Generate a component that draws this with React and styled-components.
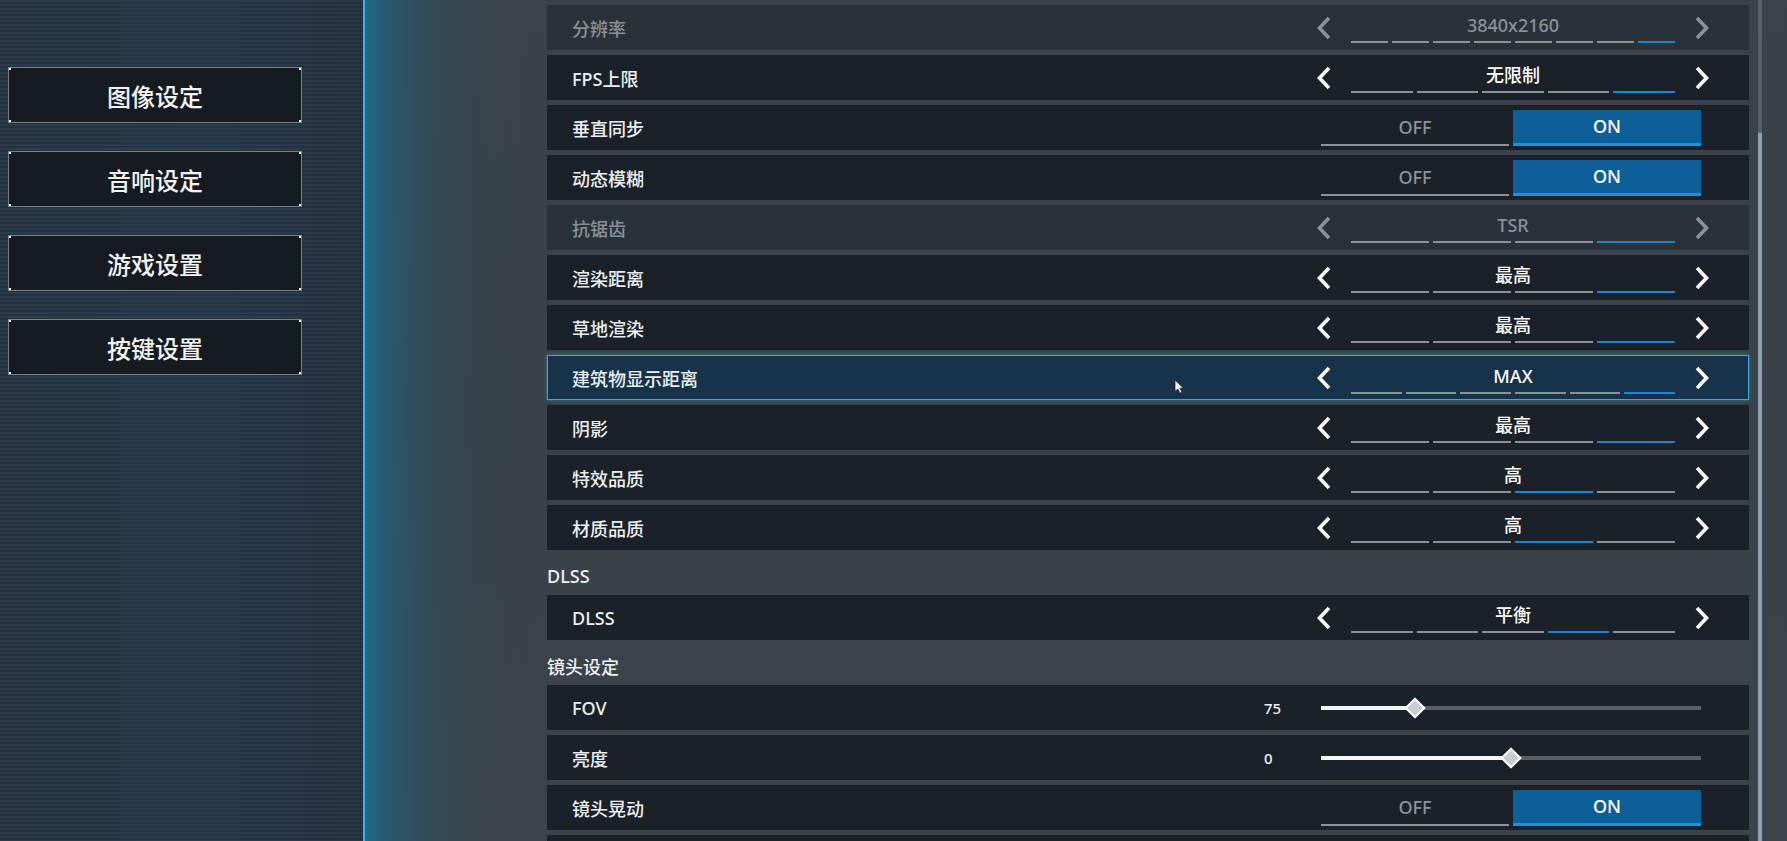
import styled, { createGlobalStyle } from 'styled-components';

const GlobalStyle = createGlobalStyle`
  html, body {
    margin: 0;
    padding: 0;
    background: #39434a;
  }
  * {
    box-sizing: border-box;
  }
`;

const Screen = styled.div`
  display: flex;
  width: 1787px;
  height: 841px;
  overflow: hidden;
  font-family: "Noto Sans", "Noto Sans CJK SC", sans-serif;
  color: #e9ecee;
`;

const Sidebar = styled.aside`
  width: 365px;
  flex-shrink: 0;
  border-right: 2px solid #3fb4e6;
  padding: 67px 0 0 8px;
  display: flex;
  flex-direction: column;
  gap: 28px;
  background:
    repeating-linear-gradient(to bottom, rgba(255, 255, 255, 0.025) 0 2px, rgba(0, 0, 0, 0.09) 2px 4px),
    linear-gradient(90deg, #263645 0%, #27394a 60%, #233242 100%);
`;

const NavButton = styled.div`
  width: 294px;
  height: 56px;
  display: flex;
  align-items: center;
  justify-content: center;
  font-size: 24px;
  font-weight: 500;
  color: #f2f4f5;
  border: 1px solid #78818a;
  background:
    linear-gradient(#fff, #fff) top left / 3px 3px no-repeat,
    linear-gradient(#fff, #fff) top right / 3px 3px no-repeat,
    linear-gradient(#fff, #fff) bottom left / 3px 3px no-repeat,
    linear-gradient(#fff, #fff) bottom right / 3px 3px no-repeat,
    #161b21;
  background-origin: border-box;
`;

const Main = styled.main`
  flex: 1;
  display: flex;
  align-items: flex-start;
  padding-left: 182px;
  background:
    linear-gradient(90deg, rgba(30, 112, 150, 0.85) 0px, rgba(32, 100, 132, 0.7) 20px, rgba(38, 84, 106, 0.45) 60px, rgba(48, 72, 86, 0.2) 110px, rgba(56, 66, 73, 0) 170px),
    linear-gradient(180deg, #3a4349 0%, #384248 50%, #3b4449 100%);
`;

const List = styled.div`
  width: 1202px;
  flex-shrink: 0;
  display: flex;
  flex-direction: column;
  gap: 5px;
  padding-top: 5px;
`;

const GroupTitle = styled.div`
  flex-shrink: 0;
  height: 35px;
  padding-top: 6px;
  display: flex;
  align-items: center;
  font-size: 18px;
  font-weight: 500;
  color: #eef0f2;
`;

const Row = styled.div`
  position: relative;
  flex-shrink: 0;
  height: 45px;
  display: flex;
  align-items: center;
  background: ${({ $disabled, $active }) =>
    $active ? '#163349' : $disabled ? '#2a3239' : '#1b2128'};
  border: ${({ $active }) => ($active ? '1px solid #3ea7d2' : 'none')};
  box-shadow: ${({ $active }) => ($active ? '0 0 4px rgba(62, 167, 210, 0.55)' : 'none')};
  padding-left: ${({ $active }) => ($active ? '24px' : '25px')};
  padding-right: ${({ $active }) => ($active ? '38px' : '39px')};
`;

const Label = styled.div`
  flex: 1;
  font-size: 18px;
  font-weight: 500;
  color: ${({ $disabled }) => ($disabled ? '#8b9197' : '#eceff1')};
`;

const Selector = styled.div`
  width: 394px;
  height: 100%;
  display: flex;
  align-items: center;
  color: ${({ $disabled }) => ($disabled ? '#8b9197' : '#ffffff')};
`;

const ChevronSvg = styled.svg`
  width: 16px;
  height: 24px;
  flex-shrink: 0;
  margin-top: 1px;
`;

const SelectorMiddle = styled.div`
  width: 324px;
  margin: 0 19px;
  align-self: stretch;
  display: flex;
  flex-direction: column;
  padding-top: 8px;
`;

const ValueText = styled.div`
  height: 24px;
  line-height: 24px;
  text-align: center;
  font-size: 18px;
  font-weight: 500;
  color: inherit;
`;

const Segments = styled.div`
  display: flex;
  gap: 4px;
  margin-top: 4px;
`;

const Segment = styled.div`
  flex: 1;
  height: 2px;
  background: ${({ $on }) => ($on ? '#1c86d2' : '#8d9297')};
`;

const Toggle = styled.div`
  width: 394px;
  display: flex;
  gap: 4px;
  padding: 0 9px 0 5px;
`;

const ToggleOption = styled.div`
  flex: 1;
  height: 36px;
  display: flex;
  align-items: center;
  justify-content: center;
  font-size: 18px;
  font-weight: 500;
  color: ${({ $on }) => ($on ? '#ffffff' : '#8d9398')};
  background: ${({ $on }) => ($on ? '#0d5f97' : 'transparent')};
  border-bottom: ${({ $on }) => ($on ? '3px solid #2190de' : '2px solid #8d9398')};
`;

const Slider = styled.div`
  width: 446px;
  display: flex;
  align-items: center;
  padding-right: 9px;
`;

const SliderValue = styled.div`
  width: 57px;
  font-size: 15px;
  font-weight: 500;
  color: #f1f3f4;
`;

const Track = styled.div`
  position: relative;
  flex: 1;
  height: 4px;
  background: #586067;
`;

const TrackFill = styled.div`
  height: 100%;
  background: #f4f5f6;
`;

const Thumb = styled.div`
  position: absolute;
  top: 50%;
  width: 15px;
  height: 15px;
  background: #c9ccd0;
  border: 2.5px solid #ffffff;
  transform: translate(-50%, -50%) rotate(45deg);
`;

const ScrollTrack = styled.div`
  width: 4px;
  height: 841px;
  margin-left: 9px;
  display: flex;
  flex-direction: column;
  background: #56616a;
`;

const ScrollThumb = styled.div`
  flex: 1;
  margin-top: 133px;
  background: #8fa3b2;
`;

const Cursor = styled.svg`
  position: absolute;
  left: 626px;
  top: 23px;
  width: 11px;
  height: 15px;
`;

function Chevron({ dir }) {
  const pts = dir === 'left' ? '13,2 3.5,12 13,22' : '3,2 12.5,12 3,22';
  return (
    <ChevronSvg viewBox="0 0 16 24">
      <polyline points={pts} fill="none" stroke="currentColor" strokeWidth="3.6" strokeLinejoin="miter" />
    </ChevronSvg>
  );
}

function Select({ value, count, active, disabled }) {
  return (
    <Selector $disabled={disabled}>
      <Chevron dir="left" />
      <SelectorMiddle>
        <ValueText>{value}</ValueText>
        <Segments>
          {Array.from({ length: count }).map((_, i) => (
            <Segment key={i} $on={i === active} />
          ))}
        </Segments>
      </SelectorMiddle>
      <Chevron dir="right" />
    </Selector>
  );
}

function OnOff({ on }) {
  return (
    <Toggle>
      <ToggleOption $on={!on}>OFF</ToggleOption>
      <ToggleOption $on={on}>ON</ToggleOption>
    </Toggle>
  );
}

function Range({ value, pct }) {
  return (
    <Slider>
      <SliderValue>{value}</SliderValue>
      <Track>
        <TrackFill style={{ width: `${pct}%` }} />
        <Thumb style={{ left: `${pct}%` }} />
      </Track>
    </Slider>
  );
}

const graphics = [
  { label: '分辨率', type: 'select', value: '3840x2160', count: 8, active: 7, disabled: true },
  { label: 'FPS上限', type: 'select', value: '无限制', count: 5, active: 4 },
  { label: '垂直同步', type: 'toggle', on: true },
  { label: '动态模糊', type: 'toggle', on: true },
  { label: '抗锯齿', type: 'select', value: 'TSR', count: 4, active: 3, disabled: true },
  { label: '渲染距离', type: 'select', value: '最高', count: 4, active: 3 },
  { label: '草地渲染', type: 'select', value: '最高', count: 4, active: 3 },
  { label: '建筑物显示距离', type: 'select', value: 'MAX', count: 6, active: 5, focused: true },
  { label: '阴影', type: 'select', value: '最高', count: 4, active: 3 },
  { label: '特效品质', type: 'select', value: '高', count: 4, active: 2 },
  { label: '材质品质', type: 'select', value: '高', count: 4, active: 2 },
];

const dlss = [{ label: 'DLSS', type: 'select', value: '平衡', count: 5, active: 3 }];

const camera = [
  { label: 'FOV', type: 'range', value: '75', pct: 24.7 },
  { label: '亮度', type: 'range', value: '0', pct: 50 },
  { label: '镜头晃动', type: 'toggle', on: true },
];

function SettingRow({ item }) {
  return (
    <Row $disabled={item.disabled} $active={item.focused}>
      <Label $disabled={item.disabled}>{item.label}</Label>
      {item.type === 'select' && (
        <Select value={item.value} count={item.count} active={item.active} disabled={item.disabled} />
      )}
      {item.type === 'toggle' && <OnOff on={item.on} />}
      {item.type === 'range' && <Range value={item.value} pct={item.pct} />}
      {item.focused && (
        <Cursor viewBox="0 0 11 15">
          <path d="M1 1 L1 12.5 L3.8 10 L6 14.2 L8 13.2 L5.9 9.2 L9.6 9.2 Z" fill="#ffffff" stroke="#1b2128" strokeWidth="0.8" />
        </Cursor>
      )}
    </Row>
  );
}

const navItems = ['图像设定', '音响设定', '游戏设置', '按键设置'];

export default function App() {
  return (
    <>
      <GlobalStyle />
      <Screen>
        <Sidebar>
          {navItems.map((n) => (
            <NavButton key={n}>{n}</NavButton>
          ))}
        </Sidebar>
        <Main>
          <List>
            {graphics.map((item) => (
              <SettingRow key={item.label} item={item} />
            ))}
            <GroupTitle>DLSS</GroupTitle>
            {dlss.map((item) => (
              <SettingRow key={item.label} item={item} />
            ))}
            <GroupTitle>镜头设定</GroupTitle>
            {camera.map((item) => (
              <SettingRow key={item.label} item={item} />
            ))}
            <Row />
          </List>
          <ScrollTrack>
            <ScrollThumb />
          </ScrollTrack>
        </Main>
      </Screen>
    </>
  );
}
